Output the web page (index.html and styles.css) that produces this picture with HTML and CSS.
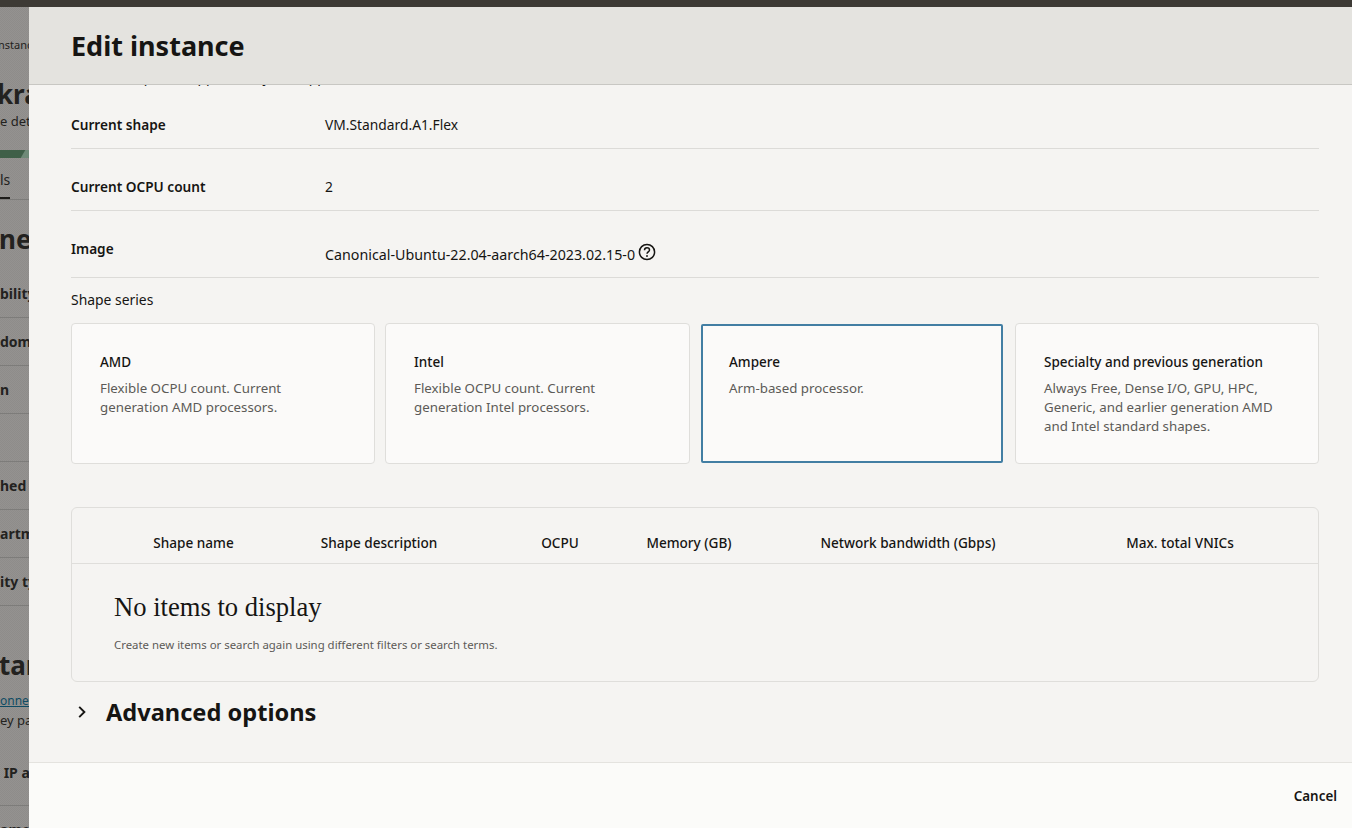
FILE: index.html
```html
<!DOCTYPE html>
<html lang="en">
<head>
<meta charset="utf-8">
<title>Edit instance</title>
<link rel="stylesheet" href="styles.css">
</head>
<body>
<div class="topbar"></div>
<div class="main">
  <div class="backdrop">
    <div class="crumb">nstances</div>
    <div class="page-title">kraken</div>
    <div class="page-sub">e details</div>
    <div class="banner"><span class="banner-tip"></span></div>
    <div class="tabs"><span class="tab-text">ls</span><span class="tab-mark"></span></div>
    <div class="section-title">ne</div>
    <div class="back-row first">bility</div>
    <div class="back-row">domain</div>
    <div class="back-row">n</div>
    <div class="back-row"></div>
    <div class="back-row">hed</div>
    <div class="back-row">artment</div>
    <div class="back-row">ity type</div>
    <div class="section-title second">tance</div>
    <div class="back-link"><a href="#">onnect</a></div>
    <div class="back-note">ey pair</div>
    <div class="back-row ip">&nbsp;IP address</div>
    <div class="back-row">ame</div>
  </div>
  <section class="panel">
    <header class="panel-head"><h1>Edit instance</h1></header>
    <div class="panel-body">
      <p class="scrolled">Set the shape as supported by this app.</p>
      <dl class="facts">
        <div class="fact"><dt>Current shape</dt><dd>VM.Standard.A1.Flex</dd></div>
        <div class="fact"><dt>Current OCPU count</dt><dd>2</dd></div>
        <div class="fact fact-image"><dt>Image</dt><dd class="image-value">Canonical-Ubuntu-22.04-aarch64-2023.02.15-0<svg class="help" viewBox="0 0 18 18" width="18" height="18" aria-hidden="true"><circle cx="9" cy="9" r="7.6" fill="none" stroke="#161513" stroke-width="1.5"/><path d="M6.5 7.2c0-1.5 1.1-2.4 2.5-2.4s2.5.9 2.5 2.2c0 1.9-2.5 2-2.5 3.8" fill="none" stroke="#161513" stroke-width="1.5"/><circle cx="9" cy="13" r=".95" fill="#161513"/></svg></dd></div>
      </dl>
      <div class="series-label">Shape series</div>
      <div class="cards">
        <div class="card"><h3>AMD</h3><p>Flexible OCPU count. Current generation AMD processors.</p></div>
        <div class="card"><h3>Intel</h3><p>Flexible OCPU count. Current generation Intel processors.</p></div>
        <div class="card selected"><h3>Ampere</h3><p>Arm-based processor.</p></div>
        <div class="card"><h3>Specialty and previous generation</h3><p>Always Free, Dense I/O, GPU, HPC, Generic, and earlier generation AMD and Intel standard shapes.</p></div>
      </div>
      <div class="table">
        <div class="thead">
          <span>Shape name</span><span>Shape description</span><span>OCPU</span><span>Memory (GB)</span><span>Network bandwidth (Gbps)</span><span>Max. total VNICs</span>
        </div>
        <div class="empty">
          <h2>No items to display</h2>
          <p>Create new items or search again using different filters or search terms.</p>
        </div>
      </div>
      <div class="advanced">
        <svg class="chevron" viewBox="0 0 8 12" width="8" height="12" aria-hidden="true"><path d="M1.2 .8 6.4 6l-5.2 5.2" fill="none" stroke="#161513" stroke-width="1.9"/></svg>
        <h2>Advanced options</h2>
      </div>
    </div>
    <footer class="panel-foot"><a class="cancel" href="#">Cancel</a></footer>
  </section>
</div>
</body>
</html>
```
FILE: styles.css
```css
* { box-sizing: border-box; }
html, body { height: 100%; }
body {
  margin: 0;
  display: flex;
  flex-direction: column;
  height: 828px;
  overflow: hidden;
  font-family: "Noto Sans", "Open Sans", sans-serif;
  font-size: 14px;
  color: #161513;
  background: #928f8c;
}
.topbar { height: 7px; flex: none; background: #3d3a35; }
.main { flex: 1; display: flex; min-height: 0; }

/* dimmed page behind the drawer */
.backdrop {
  width: 29px;
  flex: none;
  overflow: hidden;
  white-space: nowrap;
  color: #232220;
  font-size: 14px;
  background-color: #918f8d;
  background-image: conic-gradient(#8e8c8a 25%, #949290 0 50%, #8e8c8a 0 75%, #949290 0);
  background-size: 2px 2px;
}
.crumb { height: 49px; padding-top: 27px; font-size: 11px; line-height: 22px; text-indent: -2px; }
.page-title { height: 34px; margin-top: 21px; font-size: 26px; font-weight: 700; line-height: 34px; text-indent: -3px; }
.page-sub { height: 20px; margin-top: 0; line-height: 20px; font-size: 13px; }
.banner { height: 8px; margin-top: 19px; background: #3f5f48; position: relative; overflow: hidden; }
.banner-tip { position: absolute; left: 23px; top: 0; width: 8px; height: 8px; background: #6f8a78; transform: skewX(-30deg); }
.tabs { height: 42px; border-bottom: 1px solid #7d7c7a; position: relative; line-height: 44px; }
.tab-mark { position: absolute; left: 0; bottom: 0; width: 10px; height: 2px; background: #1d1c1a; }
.section-title { height: 38px; margin-top: 20px; font-size: 26px; font-weight: 700; line-height: 38px; text-indent: -1px; }
.section-title.second { margin-top: 40px; }
.back-row { height: 48px; line-height: 48px; font-weight: 700; border-bottom: 1px solid #7d7c7a; }
.back-row.first { height: 60px; line-height: 72px; }
.back-link { height: 18px; margin-top: 8px; line-height: 18px; font-size: 12px; }
.back-link a { color: #0f4b63; }
.back-note { height: 20px; line-height: 20px; font-size: 13px; }
.back-row.ip { height: 76px; line-height: 86px; }

/* drawer */
.panel { flex: 1; min-width: 0; display: flex; flex-direction: column; background: #f5f4f2; }
.panel-head {
  height: 78px;
  flex: none;
  padding-left: 42px;
  background: #e4e3df;
  border-bottom: 1px solid #c8c7c3;
  display: flex;
  align-items: center;
  position: relative;
  z-index: 1;
}
.panel-head h1 { margin: 0; font-size: 27px; font-weight: 700; line-height: 36px; }
.panel-body { flex: 1; min-height: 0; overflow: hidden; padding: 0 33px 0 42px; }
.scrolled { margin: -19px 0 0; height: 21px; line-height: 21px; white-space: nowrap; overflow: hidden; }

.facts { margin: 0; }
.fact { display: flex; align-items: center; height: 62px; padding-top: 14px; border-bottom: 1px solid #dcdbd8; font-size: 13.8px; }
.fact dt { width: 254px; flex: none; font-weight: 600; font-size: 13.65px; }
.fact dd { margin: 0; }
.fact-image { height: 67px; padding-top: 8px; }
.image-value { display: flex; align-items: center; padding-top: 12px; font-size: 14.25px; }
.help { margin: -5px 0 0 3px; }

.series-label { margin-top: 12px; height: 20px; line-height: 20px; font-size: 13.9px; }
.cards { display: grid; grid-template-columns: 304px 305px 305px 304px; column-gap: 10px; margin-top: 13px; }
.card {
  height: 141px;
  padding: 28px 28px 0;
  background: #fbfaf9;
  border: 1px solid #dfdedb;
  border-radius: 4px;
}
.card h3 { margin: 0; font-size: 13.5px; font-weight: 500; line-height: 20px; }
.card p { margin: 7px 0 0; line-height: 19px; color: #5c5a57; font-size: 13.3px; }
.card.selected { border: 2px solid #427ea3; padding: 26px 26px 0; margin: 1px 2px 1px 1px; height: 139px; border-radius: 2px; }

.table { margin-top: 43px; height: 175px; border: 1px solid #dfdedb; border-radius: 6px; }
.thead {
  height: 56px;
  padding: 14px 0 0 43px;
  display: grid;
  grid-template-columns: 157px 214px 148px 110px 328px 216px;
  align-items: center;
  text-align: center;
  font-size: 13.6px;
  font-weight: 500;
  white-space: nowrap;
  border-bottom: 1px solid #dfdedb;
}
.empty { padding: 27px 42px 0; }
.empty h2 { margin: 0; font-family: "Liberation Serif", serif; font-size: 26.6px; font-weight: 400; line-height: 32px; }
.empty p { margin: 14px 0 0; font-size: 11.4px; line-height: 16px; color: #5c5a57; }

.advanced { display: flex; align-items: center; height: 36px; margin-top: 12px; }
.chevron { margin-left: 7px; flex: none; }
.advanced h2 { margin: 0 0 0 20px; font-size: 23.6px; font-weight: 700; line-height: 36px; }

.panel-foot {
  height: 66px;
  flex: none;
  padding: 1px 15px 0 0;
  background: #fbfbf9;
  border-top: 1px solid #e4e3df;
  display: flex;
  align-items: center;
  justify-content: flex-end;
}
.cancel { color: #161513; font-size: 13.4px; font-weight: 600; text-decoration: none; }
```
